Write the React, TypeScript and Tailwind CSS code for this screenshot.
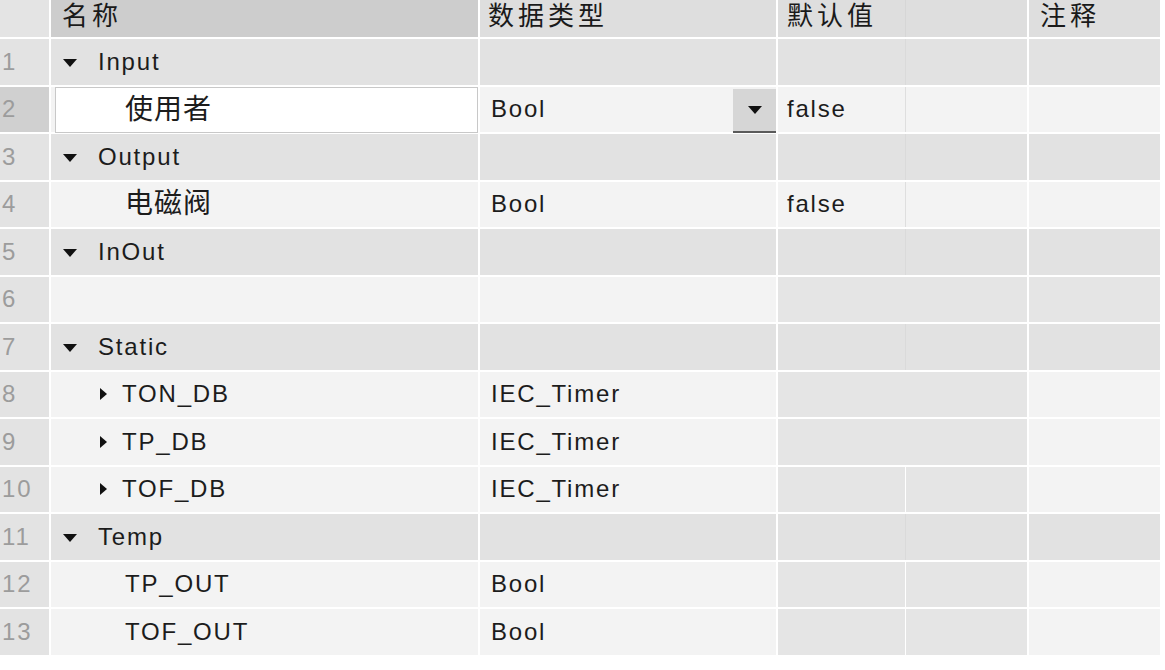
import React from 'react';

type Kind = 'group' | 'child' | 'struct' | 'empty';

interface VarRow {
  n: number;
  kind: Kind;
  name?: string;
  cjk?: boolean;
  type?: string;
  value?: string;
  editing?: boolean;
  // default value cell greyed out (not editable)
  locked?: boolean;
  split?: 'line' | 'white' | 'none';
  commentLocked?: boolean;
}

const rows: VarRow[] = [
  { n: 1, kind: 'group', name: 'Input' },
  { n: 2, kind: 'child', name: '使用者', cjk: true, type: 'Bool', value: 'false', editing: true, split: 'line' },
  { n: 3, kind: 'group', name: 'Output' },
  { n: 4, kind: 'child', name: '电磁阀', cjk: true, type: 'Bool', value: 'false', split: 'line' },
  { n: 5, kind: 'group', name: 'InOut' },
  { n: 6, kind: 'empty', locked: true, commentLocked: true, split: 'none' },
  { n: 7, kind: 'group', name: 'Static' },
  { n: 8, kind: 'struct', name: 'TON_DB', type: 'IEC_Timer', locked: true, split: 'none' },
  { n: 9, kind: 'struct', name: 'TP_DB', type: 'IEC_Timer', locked: true, split: 'none' },
  { n: 10, kind: 'struct', name: 'TOF_DB', type: 'IEC_Timer', locked: true, split: 'white' },
  { n: 11, kind: 'group', name: 'Temp' },
  { n: 12, kind: 'child', name: 'TP_OUT', type: 'Bool', locked: true, split: 'white' },
  { n: 13, kind: 'child', name: 'TOF_OUT', type: 'Bool', locked: true, split: 'white' },
];

const GROUP = 'bg-[#e2e2e2]';
const LIGHT = 'bg-[#f3f3f3]';
const LOCKED = 'bg-[#e5e5e5]';

function Down({ className }: { className?: string }) {
  return (
    <svg width="14" height="8" viewBox="0 0 14 8" className={className}>
      <path d="M0 0H14L7 8Z" fill="#111" />
    </svg>
  );
}

function Right() {
  return (
    <svg width="7" height="12" viewBox="0 0 7 12">
      <path d="M0 0L7 6L0 12Z" fill="#111" />
    </svg>
  );
}

function Row({ r }: { r: VarRow }) {
  const isGroup = r.kind === 'group';
  const base = isGroup ? GROUP : LIGHT;
  const valueBg = isGroup ? GROUP : r.locked ? LOCKED : LIGHT;
  const commentBg = isGroup ? GROUP : r.commentLocked ? LOCKED : LIGHT;
  const splitCls =
    r.split === 'white'
      ? 'border-l border-white'
      : r.split === 'line'
        ? 'border-l border-[#dedede]'
        : isGroup
          ? 'border-l border-[#dadada]'
          : 'border-l border-transparent';

  return (
    <div className="flex h-[45.5px] gap-[2px]">
      <div
        className={`w-[49px] shrink-0 flex items-center pl-[2px] text-[24px] tracking-[2px] text-[#9c9c9c] ${
          r.editing ? 'bg-[#d0d0d0]' : 'bg-[#e3e3e3]'
        }`}
      >
        {r.n}
      </div>

      <div className={`w-[427px] shrink-0 flex items-center ${base}`}>
        {isGroup && (
          <div className="flex items-center">
            <Down className="ml-[12px] mr-[21px] mt-[2px]" />
            <span>{r.name}</span>
          </div>
        )}
        {r.kind === 'struct' && (
          <div className="flex items-center">
            <span className="ml-[49px] mr-[15px] flex">
              <Right />
            </span>
            <span>{r.name}</span>
          </div>
        )}
        {r.kind === 'child' && !r.editing && (
          <span className={`ml-[74px] ${r.cjk ? 'text-[28px] tracking-[1px]' : ''}`}>{r.name}</span>
        )}
        {r.editing && (
          <div className="ml-[4px] mt-[2px] h-[46px] flex-1 flex items-center bg-white border border-[#c8c8c8]">
            <span className="ml-[69px] text-[28px] tracking-[1px]">{r.name}</span>
          </div>
        )}
      </div>

      <div className={`w-[296px] shrink-0 flex items-center ${base}`}>
        {r.type && <span className="pl-[11px] flex-1">{r.type}</span>}
        {r.editing && (
          <div className="w-[43px] h-[44px] mt-[2px] self-start flex items-center justify-center bg-[#d6d6d6] border-b-2 border-[#5a5a5a]">
            <Down />
          </div>
        )}
      </div>

      <div className="w-[249px] shrink-0 flex">
        <div className={`w-[127px] flex items-center ${valueBg}`}>
          {r.value && <span className="pl-[9px]">{r.value}</span>}
        </div>
        <div className={`flex-1 ${valueBg} ${splitCls}`} />
      </div>

      <div className={`w-[131px] shrink-0 ${commentBg}`} />
    </div>
  );
}

export default function App() {
  return (
    <div className="w-[1165px] h-[670px] bg-white overflow-hidden font-['Liberation_Sans','Noto_Sans_CJK_SC',sans-serif] text-[24px] tracking-[1.8px] text-[#1c1c1c] leading-none">
      <div className="flex flex-col gap-[2px] w-[1160px]">
        {/* Header */}
        <div className="flex h-[37px] gap-[2px] text-[26px] tracking-[4px] text-[#1a1a1a]">
          <div className="w-[49px] shrink-0 bg-[#e4e4e4]" />
          <div className="w-[427px] shrink-0 bg-[#cdcdcd] flex items-center pl-[11px] pb-[6px]">名称</div>
          <div className="w-[296px] shrink-0 bg-[#dedede] flex items-center pl-[8px] pb-[6px]">数据类型</div>
          <div className="w-[249px] shrink-0 flex">
            <div className="w-[127px] bg-[#dedede] flex items-center pl-[9px] pb-[6px]">默认值</div>
            <div className="flex-1 bg-[#dedede] border-l border-[#d6d6d6]" />
          </div>
          <div className="w-[131px] shrink-0 bg-[#dedede] flex items-center pl-[11px] pb-[6px]">注释</div>
        </div>

        {rows.map(r => (
          <Row key={r.n} r={r} />
        ))}
      </div>
    </div>
  );
}
